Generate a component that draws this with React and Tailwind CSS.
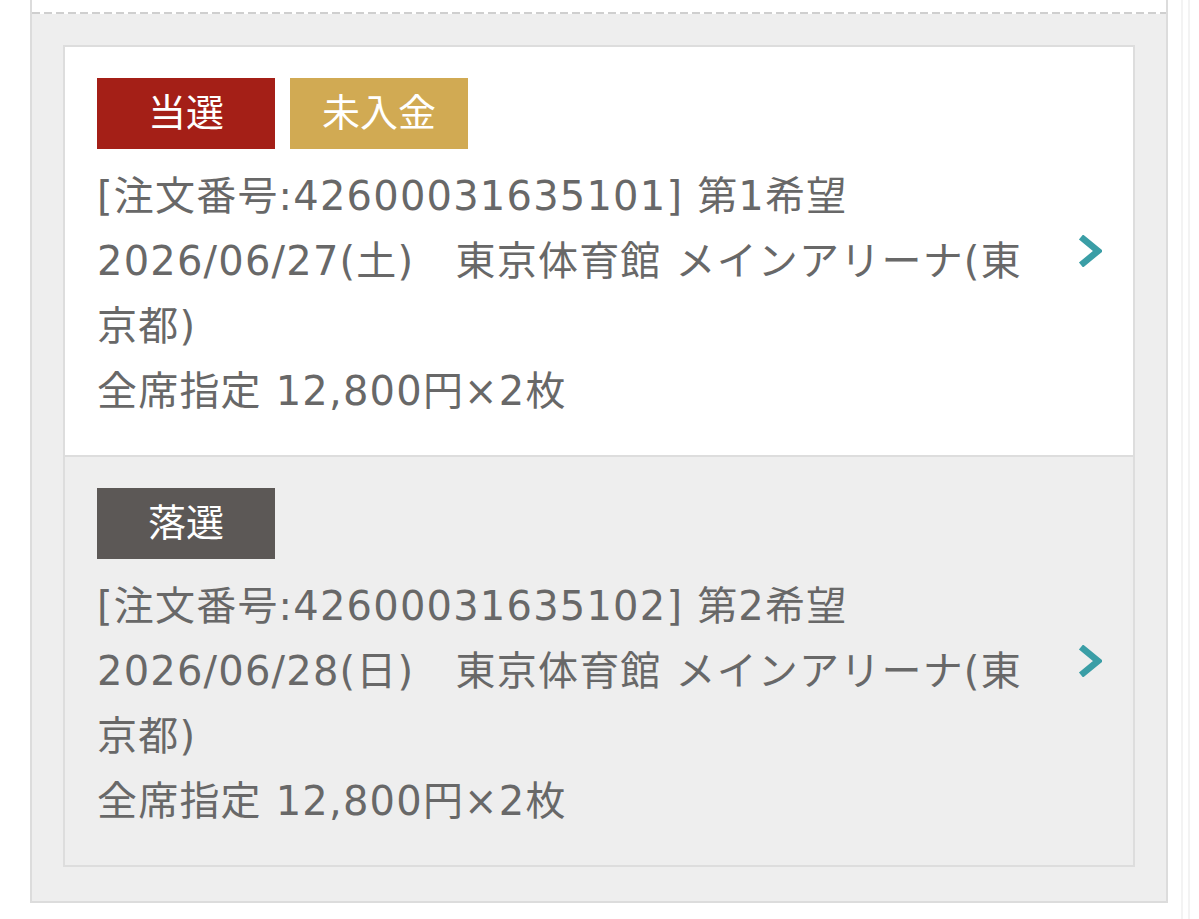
import React from 'react';

const orders = [
  {
    badges: [
      { label: '当選', className: 'bg-[#a41f17]' },
      { label: '未入金', className: 'bg-[#d1aa53]' },
    ],
    number: '42600031635101',
    wish: '第1希望',
    date: '2026/06/27(土)',
    bg: 'bg-white',
  },
  {
    badges: [{ label: '落選', className: 'bg-[#5c5856]' }],
    number: '42600031635102',
    wish: '第2希望',
    date: '2026/06/28(日)',
    bg: 'bg-[#eeeeee]',
  },
];

const Chevron = () => (
  <svg width="24" height="32" viewBox="0 0 24 32" className="shrink-0">
    <polyline
      points="3,2 20,16 3,30"
      fill="none"
      stroke="#3a9ea6"
      strokeWidth="6.5"
      strokeLinejoin="miter"
    />
  </svg>
);

const OrderItem = ({ order, last }) => (
  <div
    className={`flex items-center pl-[32px] pr-[31px] pt-[31px] pb-[31px] ${order.bg} ${
      last ? '' : 'border-b-2 border-[#dddddd]'
    }`}
  >
    <div className="w-[950px]">
      {/* Status badges */}
      <div className="flex gap-[15px] mb-[15px]">
        {order.badges.map((b) => (
          <span
            key={b.label}
            className={`w-[178px] h-[71px] flex items-center justify-center text-white text-[38px] ${b.className}`}
          >
            {b.label}
          </span>
        ))}
      </div>
      <div className="text-[40px] leading-[65px] tracking-[1.2px] text-[#686868]">
        <p>
          [注文番号:{order.number}] {order.wish}
        </p>
        <p>
          {order.date}　東京体育館 メインアリーナ(東京都)
        </p>
        <p>全席指定 12,800円×2枚</p>
      </div>
    </div>
    <div className="flex-1 flex justify-end">
      <Chevron />
    </div>
  </div>
);

const App = () => {
  return (
    <div
      className="min-h-screen bg-white flex"
      style={{ fontFamily: '"DejaVu Sans", "Noto Sans CJK JP", sans-serif' }}
    >
      <div className="ml-[30px] w-[1138px] h-[903px] border-x-2 border-b-2 border-[#dcdcdc] bg-[#eeeeee] flex flex-col">
        {/* Previous item tail */}
        <div className="h-[12px] bg-white" />
        <div className="h-[2px] bg-[repeating-linear-gradient(90deg,#cfcfcf_0px,#cfcfcf_8px,#ffffff_8px,#ffffff_12px)]" />

        <div className="px-[31px] pt-[31px]">
          <div className="border-2 border-[#dddddd]">
            {orders.map((o, i) => (
              <OrderItem key={o.number} order={o} last={i === orders.length - 1} />
            ))}
          </div>
        </div>
      </div>
      <div className="ml-[13px] w-[9px] border-x-2 border-[#f3f3f3]" />
    </div>
  );
};

export default App;
